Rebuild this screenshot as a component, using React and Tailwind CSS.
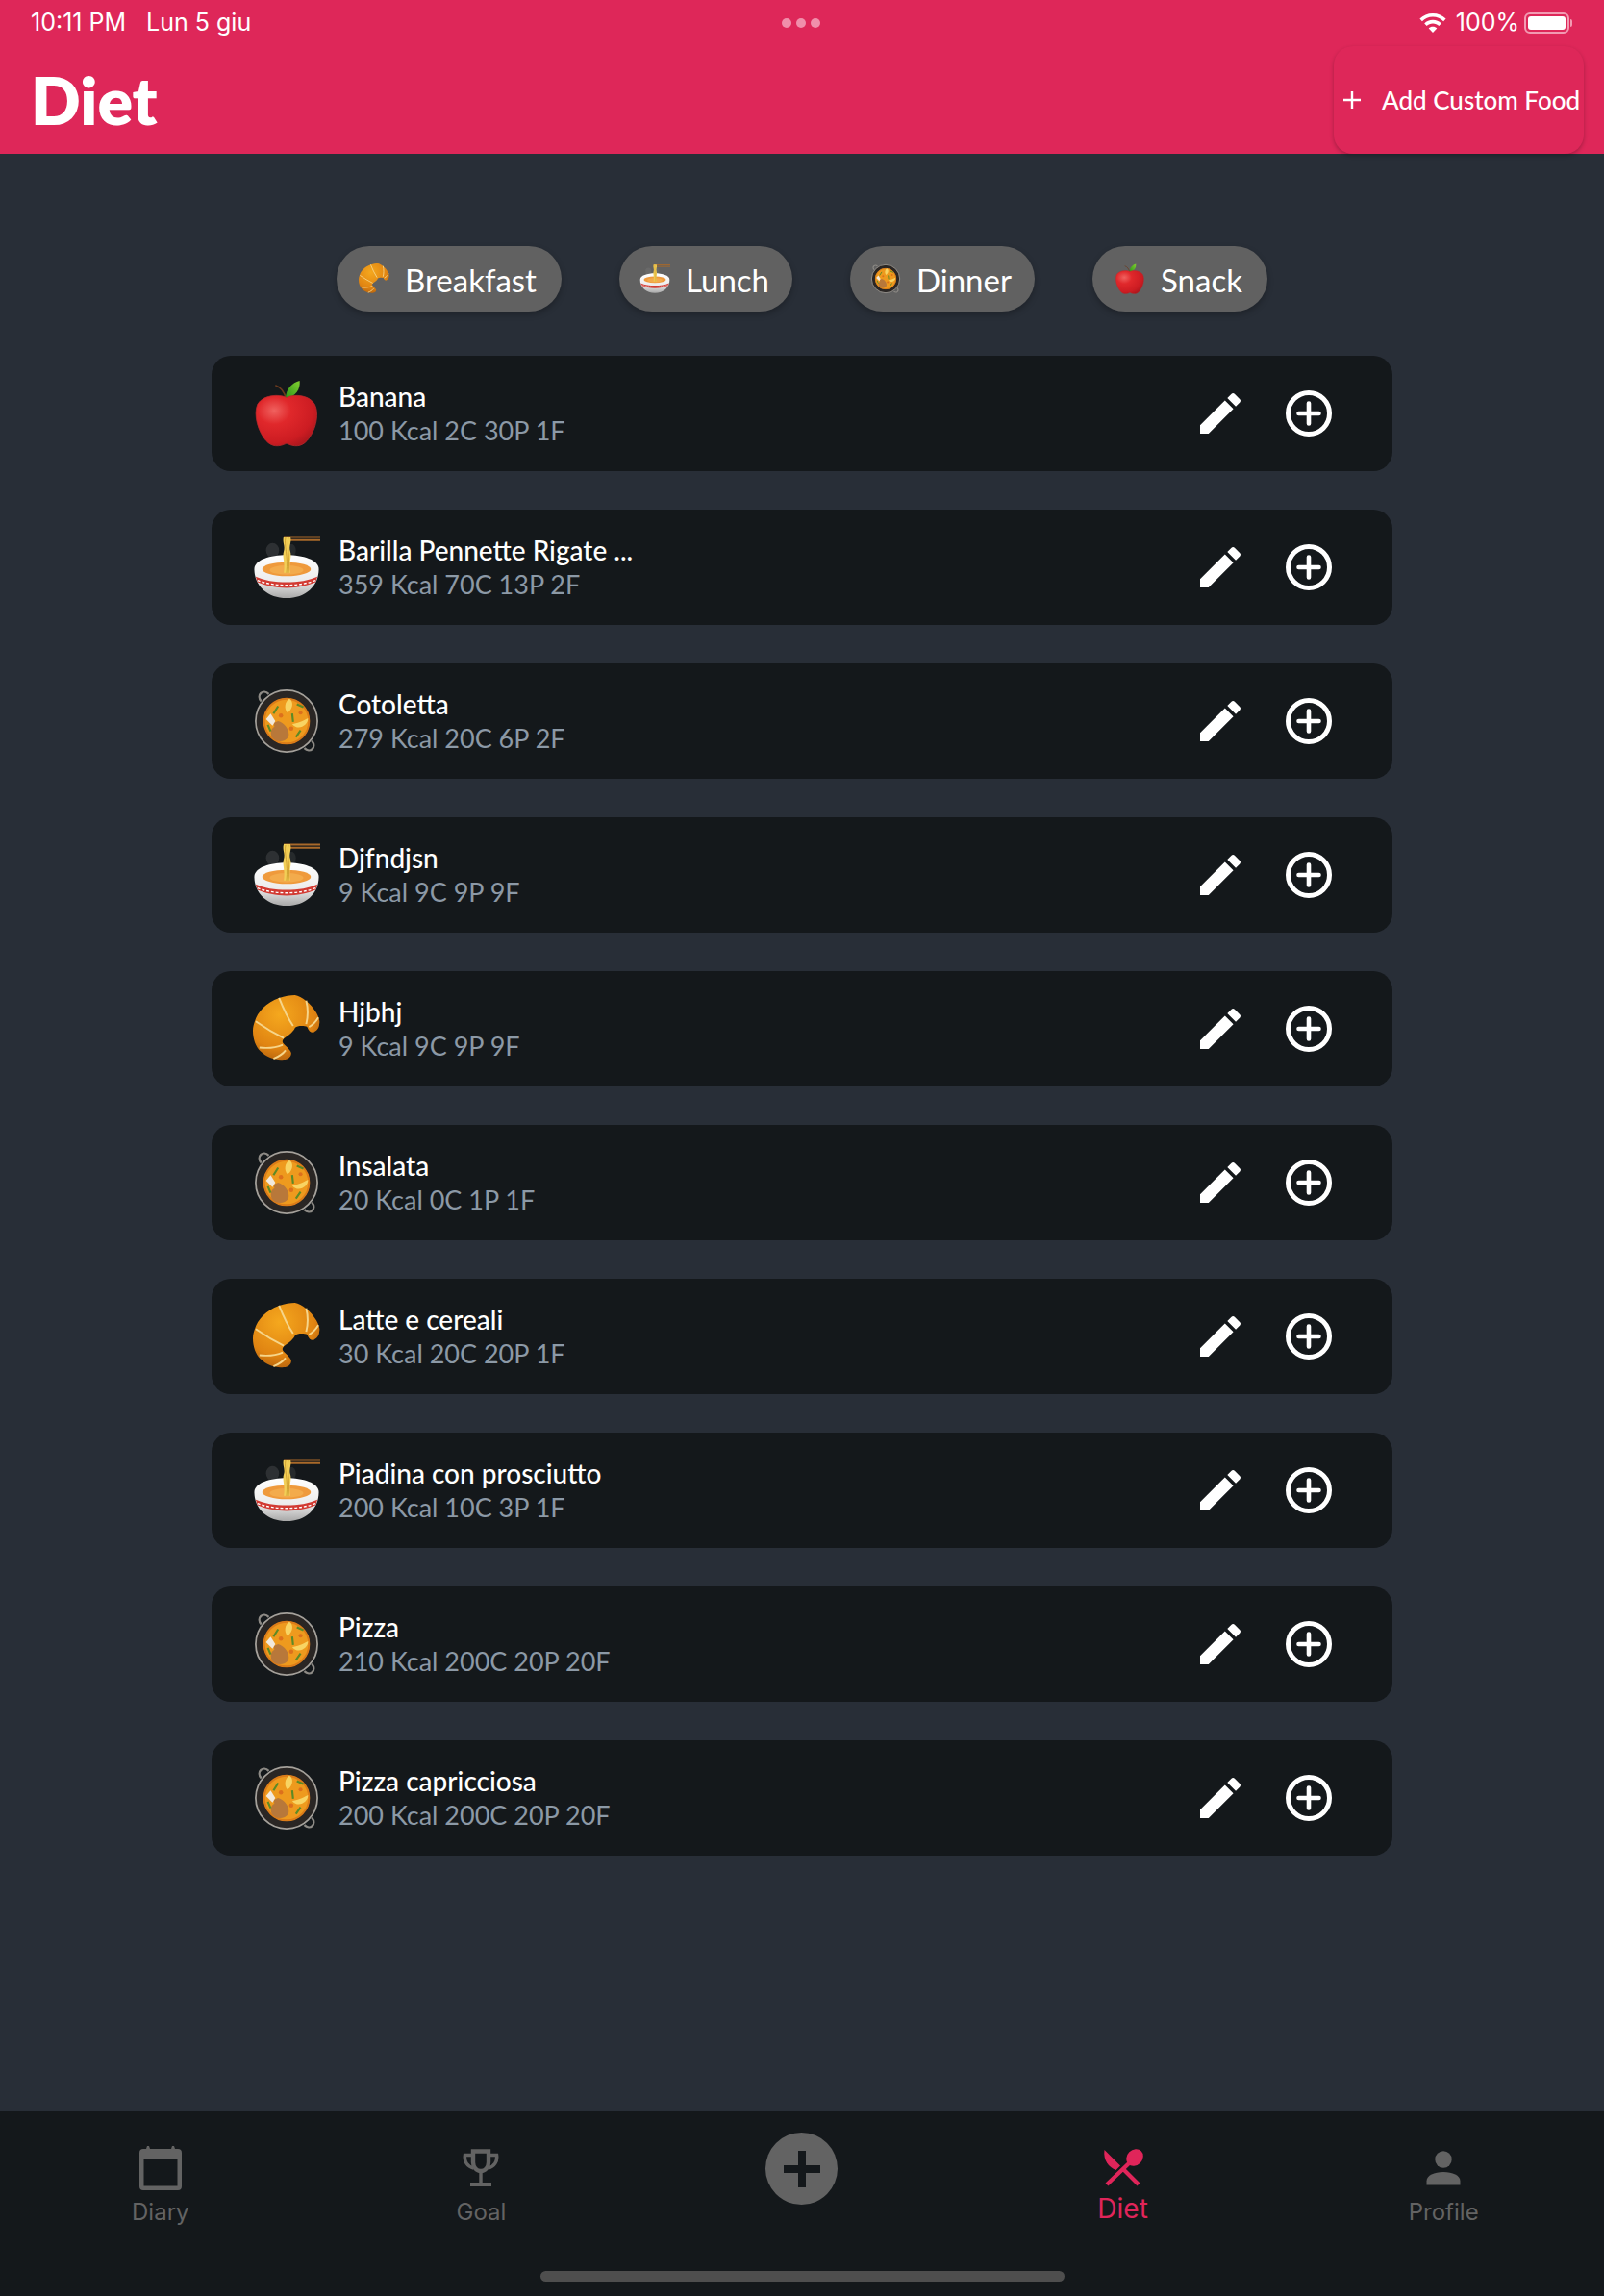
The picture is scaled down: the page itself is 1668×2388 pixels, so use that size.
import React from "react";

function Apple({ size = 72 }) {
  return (
    <svg width={size} height={size} viewBox="0 0 72 72">
      <defs>
        <radialGradient id="ag" cx="0.3" cy="0.3" r="0.85">
          <stop offset="0" stopColor="#f0625f" />
          <stop offset="0.32" stopColor="#e0282b" />
          <stop offset="0.75" stopColor="#cc1c22" />
          <stop offset="1" stopColor="#a3151c" />
        </radialGradient>
        <linearGradient id="al" x1="0" y1="1" x2="1" y2="0">
          <stop offset="0" stopColor="#2c9419" />
          <stop offset="1" stopColor="#82cf30" />
        </linearGradient>
      </defs>
      <path d="M24 6 C30 8 34 13 35.500 21" fill="none" stroke="#6b3a1e" strokeWidth="1.600" />
      <path d="M35 20 C35 10 42 3 50 1 C51 10 46 18 35 20Z" fill="url(#al)" />
      <path d="M36 19 C44 15 60 16 66 26 C72 38 66 56 58 65 C52 72 44 72 36 68 C28 72 20 72 14 65 C6 56 0 38 5 26 C11 16 28 15 36 19Z" fill="url(#ag)" stroke="#b8282a" strokeWidth="0.800" />
    </svg>
  );
}

function Bowl({ size = 72 }) {
  return (
    <svg width={size} height={size} viewBox="0 0 72 72">
      <defs>
        <linearGradient id="bw" x1="0" y1="0" x2="0" y2="1">
          <stop offset="0" stopColor="#ffffff" />
          <stop offset="0.6" stopColor="#ececec" />
          <stop offset="1" stopColor="#a8a8a8" />
        </linearGradient>
      </defs>
      <ellipse cx="21" cy="18" rx="7" ry="8" fill="#8a8a8a" opacity="0.22" />
      <ellipse cx="41" cy="18" rx="5" ry="7" fill="#8a8a8a" opacity="0.16" />
      <path d="M1.500 38 C1.500 18 70.500 18 70.500 38 C70.500 56 56 69 36 69 C16 69 1.500 56 1.500 38Z" fill="url(#bw)" />
      <ellipse cx="36" cy="38" rx="26" ry="7.500" fill="#ef9a3c" />
      <ellipse cx="36" cy="39" rx="18" ry="5" fill="#f3ab4c" />
      <path d="M33 3.500 H72 M33 7 H72" stroke="#a9692a" strokeWidth="2" />
      <path d="M33 3 C31 9 35 13 33 19 C31 25 35 31 33 42 H40 C38 31 42 25 40 19 C38 13 42 9 40 3Z" fill="#f2cf57" />
      <path d="M35 4 C33 13 38 23 36 42 M38 4 C36 13 40 25 38 42" stroke="#c89628" strokeWidth="0.800" fill="none" />
      <path d="M3 46 C20 54 52 54 69 46 L67 52 C50 60 22 60 5 52Z" fill="#d23a32" />
      <path d="M5 50 C22 57 50 57 67 50" stroke="#fff" strokeWidth="1.400" strokeDasharray="3 2" fill="none" />
    </svg>
  );
}

function Pan({ size = 72 }) {
  return (
    <svg width={size} height={size} viewBox="0 0 72 72">
      <path d="M9 15 C3 8 11 1 17 7" fill="none" stroke="#8d8a85" strokeWidth="2.400" />
      <path d="M63 57 C69 64 61 71 55 65" fill="none" stroke="#8d8a85" strokeWidth="2.400" />
      <circle cx="36" cy="36" r="33" fill="#2a2624" stroke="#a5a19b" strokeWidth="1.800" />
      <circle cx="36" cy="36" r="24.500" fill="#ee9a1e" />
      <circle cx="36" cy="36" r="24" fill="none" stroke="#dc7c18" strokeWidth="2" />
      <path d="M39 12 C43 14 44 22 37 27 C33 23 34 15 39 12Z" fill="#f8d463" />
      <path d="M42 39 C47 39 53 36 59 33 C59 41 48 47 42 39Z" fill="#f8d463" />
      <path d="M22 38 L27 36 C34 38 40 46 38 53 C34 59 25 59 21 54 C18 50 19 44 23 42Z" fill="#b8783a" />
      <path d="M14 34 L19 28 L24 36 L21 41Z" fill="#f2e9dc" />
      <path d="M22 28 L27 20 M42 28 L43 37 M47 18 L54 21 M46 53 L51 46 M16 40 L19 47" stroke="#5d8a26" strokeWidth="2.200" />
      <circle cx="30" cy="30" r="2.300" fill="#dc701c" />
      <circle cx="41" cy="44" r="2.300" fill="#dc701c" />
      <circle cx="51" cy="27" r="2.100" fill="#dc701c" />
    </svg>
  );
}

function Croissant({ size = 72 }) {
  return (
    <svg width={size} height={size} viewBox="0 0 72 72">
      <defs>
        <radialGradient id="cg" cx="0.4" cy="0.3" r="0.8">
          <stop offset="0" stopColor="#f5a81e" />
          <stop offset="0.65" stopColor="#e08412" />
          <stop offset="1" stopColor="#a9590c" />
        </radialGradient>
      </defs>
      <path d="M2 28 C5 18 14 8 28 3 C34 1 40 0 45 0 C52 1 62 9 68 19 C71 25 72 28 71 31 C71 35 68 38 66 39 C64 41 60 40 58 34 C56 33 48 32 45 35 C44 38 39 43 35 45 C32 47 31 49 32 51 C35 55 40 58 41 62 C41 66 38 69 33 69 C25 70 15 67 8 60 C3 55 0 47 0 38 C0 34 1 31 2 28Z" fill="url(#cg)" />
      <path d="M3 28 C13 35 23 41 33 46 M28 3 C32 13 37 24 43 33 M57 6 C59 14 59 23 57 31 M70 24 C67 29 64 32 60 34 M7 56 C15 57 25 56 32 53 M22 68 C27 66 32 63 35 59" stroke="#f6d58a" strokeWidth="2" fill="none" />
    </svg>
  );
}

const EMOJI = { apple: Apple, bowl: Bowl, pan: Pan, croissant: Croissant };

function Pencil() {
  return (
    <svg width="56" height="56" viewBox="0 0 24 24" fill="#ffffff">
      <path d="M3 17.250V21h3.750L17.810 9.940l-3.750-3.750L3 17.250zM20.710 7.040c.39-.39.39-1.020 0-1.410l-2.340-2.340c-.39-.39-1.020-.39-1.410 0l-1.830 1.830 3.750 3.750 1.830-1.830z" />
    </svg>
  );
}

function PlusCircle() {
  return (
    <svg width="48" height="48" viewBox="0 0 48 48" fill="none" stroke="#ffffff">
      <circle cx="24" cy="24" r="21.500" strokeWidth="5" />
      <path d="M24 13.500V34.500M13.500 24H34.500" strokeWidth="4.600" strokeLinecap="round" />
    </svg>
  );
}

function Calendar() {
  return (
    <svg width="44" height="48" viewBox="0 0 44 48" fill="#636363">
      <path fillRule="evenodd" d="M7 4 L8 1 H10 L11 4 H33 L34 1 H36 L37 4 H40 A4 4 0 0 1 44 8 V43 A4 4 0 0 1 40 47 H4 A4 4 0 0 1 0 43 V8 A4 4 0 0 1 4 4 Z M4.500 14 V42.500 H39.500 V14 Z" />
    </svg>
  );
}

function Trophy() {
  return (
    <svg width="40" height="40" viewBox="0 0 40 40" fill="none" stroke="#636363">
      <path d="M12 2.500 H28 V14 C28 19 24.500 23 20 23 C15.500 23 12 19 12 14 Z" strokeWidth="4.400" />
      <path d="M11 6.500 H3.500 C2.500 13 6 18.500 12.500 20 M29 6.500 H36.500 C37.500 13 34 18.500 27.500 20" strokeWidth="3.600" />
      <path d="M20 23 V35" strokeWidth="3.400" />
      <path d="M9 37 H31" strokeWidth="4" />
    </svg>
  );
}

function Cutlery() {
  return (
    <svg width="42" height="40" viewBox="0 0 42 40">
      <path d="M1.500 1 L18 17.500 L13.500 22 C6 19 0 12 1.500 1Z" fill="#e0255a" />
      <ellipse cx="33" cy="9" rx="9.500" ry="8" transform="rotate(-45 33 9)" fill="#e0255a" />
      <path d="M27 15 L4 37 M22 22 L37 37" stroke="#e0255a" strokeWidth="4.200" fill="none" />
    </svg>
  );
}

function Person() {
  return (
    <svg width="36" height="36" viewBox="0 0 36 36" fill="#636363">
      <circle cx="18" cy="9" r="8.700" />
      <path d="M0.500 35.500v-4c0-6 8-9.500 17.500-9.500s17.500 3.500 17.500 9.500v4z" />
    </svg>
  );
}

const FOODS = [
  ["apple", "Banana", "100 Kcal 2C 30P 1F"],
  ["bowl", "Barilla Pennette Rigate ...", "359 Kcal 70C 13P 2F"],
  ["pan", "Cotoletta", "279 Kcal 20C 6P 2F"],
  ["bowl", "Djfndjsn", "9 Kcal 9C 9P 9F"],
  ["croissant", "Hjbhj", "9 Kcal 9C 9P 9F"],
  ["pan", "Insalata", "20 Kcal 0C 1P 1F"],
  ["croissant", "Latte e cereali", "30 Kcal 20C 20P 1F"],
  ["bowl", "Piadina con prosciutto", "200 Kcal 10C 3P 1F"],
  ["pan", "Pizza", "210 Kcal 200C 20P 20F"],
  ["pan", "Pizza capricciosa", "200 Kcal 200C 20P 20F"],
];

const PILLS = [
  ["croissant", "Breakfast", "w-[234px]"],
  ["bowl", "Lunch", "w-[180px]"],
  ["pan", "Dinner", "w-[192px]"],
  ["apple", "Snack", "w-[182px]"],
];

function FoodRow({ kind, name, info }) {
  const Em = EMOJI[kind];
  return (
    <div className="flex h-[120px] items-center rounded-[20px] bg-[#14181b] pl-[43px] pr-[63px]">
      <Em size={70} />
      <div className="ml-[19px] flex flex-1 flex-col font-['Lato',sans-serif] text-[27px] leading-[35px]">
        <span className="text-[28px] font-medium text-white">{name}</span>
        <span className="text-[#8c99a6]">{info}</span>
      </div>
      <div className="flex items-center gap-[40px]">
        <Pencil />
        <PlusCircle />
      </div>
    </div>
  );
}

function Tab({ icon, label, active }) {
  return (
    <div className="flex h-full flex-col items-center pt-[35px]">
      <div className="flex h-[48px] items-center justify-center">{icon}</div>
      <span className={active ? "mt-[1px] font-['Inter',sans-serif] text-[28px] leading-[34px] text-[#e0255a]" : "mt-[7px] font-['Inter',sans-serif] text-[24px] leading-[30px] text-[#636363]"}>
        {label}
      </span>
    </div>
  );
}

export default function App() {
  return (
    <div className="flex h-[2388px] w-[1668px] flex-col overflow-hidden bg-[#282e37]">
      <header className="relative h-[160px] shrink-0 bg-[#de2759] text-white">
        <div className="flex h-[48px] items-center justify-between pl-[32px] pr-[33px] font-['Inter',sans-serif] text-[25px]">
          <div className="flex gap-[21px]">
            <span>10:11 PM</span>
            <span>Lun 5 giu</span>
          </div>
          <div className="flex items-center">
            <svg width="28" height="22" viewBox="0 0 28 22" fill="#fff">
              <path d="M14 1C8.600 1 4 3 .4 6.600l2.500 2.600C5.800 6.300 9.600 4.600 14 4.600s8.200 1.700 11.100 4.600l2.500-2.600C24 3 19.400 1 14 1z" />
              <path d="M14 7.800c-3.500 0-6.500 1.300-8.800 3.600l2.500 2.600c1.600-1.600 3.800-2.600 6.300-2.600s4.700 1 6.300 2.600l2.500-2.600C20.500 9.100 17.500 7.800 14 7.800z" />
              <path d="M14 14.700c-1.700 0-3.200.7-4.300 1.700L14 21l4.300-4.600c-1.100-1-2.600-1.700-4.300-1.700z" />
            </svg>
            <span className="ml-[10px]">100%</span>
            <div className="ml-[5px] flex h-[22px] w-[47px] items-center rounded-[6px] border-2 border-[#f29ab2] p-[2px]">
              <div className="h-full w-full rounded-[3px] bg-white" />
            </div>
            <div className="ml-[1px] h-[8px] w-[2px] rounded-r-sm bg-[#f29ab2]" />
          </div>
        </div>
        <div className="flex h-[112px] items-center justify-between pl-[32px] pr-[21px]">
          <h1 className="font-['Lato',sans-serif] text-[68px] font-extrabold leading-none">Diet</h1>
          <div className="flex h-[112px] w-[260px] items-center rounded-[20px] pl-[10px] shadow-[0_2px_4px_rgba(0,0,0,0.25)]">
            <svg width="18" height="18" viewBox="0 0 18 18" stroke="#fff" strokeWidth="2.400">
              <path d="M9 0V18M0 9H18" />
            </svg>
            <span className="ml-[22px] whitespace-nowrap font-['Lato',sans-serif] text-[26px] font-medium">Add Custom Food</span>
          </div>
        </div>
        <div className="absolute left-[813px] top-[19px] flex gap-[5px]">
          <span className="h-[10px] w-[10px] rounded-full bg-[#f08fab]" />
          <span className="h-[10px] w-[10px] rounded-full bg-[#f08fab]" />
          <span className="h-[10px] w-[10px] rounded-full bg-[#f08fab]" />
        </div>
      </header>

      <main className="flex-1 pt-[96px]">
        <div className="flex justify-center gap-[60px]">
          {PILLS.map(([kind, label, w]) => {
            const Em = EMOJI[kind];
            return (
              <div key={label} className={`flex h-[68px] items-center justify-center gap-[16px] rounded-full bg-[#616161] pr-[3px] font-['Lato',sans-serif] text-[33px] text-white shadow-[0_3px_6px_rgba(0,0,0,0.25)] ${w}`}>
                <Em size={32} />
                <span className="pt-[3px]">{label}</span>
              </div>
            );
          })}
        </div>
        <div className="mx-[220px] mt-[46px] flex flex-col gap-[40px]">
          {FOODS.map(([kind, name, info]) => (
            <FoodRow key={name} kind={kind} name={name} info={info} />
          ))}
        </div>
      </main>

      <nav className="relative h-[192px] shrink-0 bg-[#14181b]">
        <div className="grid h-full grid-cols-5">
          <Tab icon={<Calendar />} label="Diary" />
          <Tab icon={<Trophy />} label="Goal" />
          <div className="flex justify-center pt-[22px]">
            <div className="flex h-[75px] w-[75px] items-center justify-center rounded-full bg-[#636363]">
              <svg width="38" height="38" viewBox="0 0 38 38" fill="#14181b">
                <path d="M15 0h8v15h15v8H23v15h-8V23H0v-8h15z" />
              </svg>
            </div>
          </div>
          <Tab icon={<Cutlery />} label="Diet" active />
          <Tab icon={<Person />} label="Profile" />
        </div>
        <div className="absolute bottom-[15px] left-[562px] h-[11px] w-[545px] rounded-full bg-[#4e4e4e]" />
      </nav>
    </div>
  );
}
